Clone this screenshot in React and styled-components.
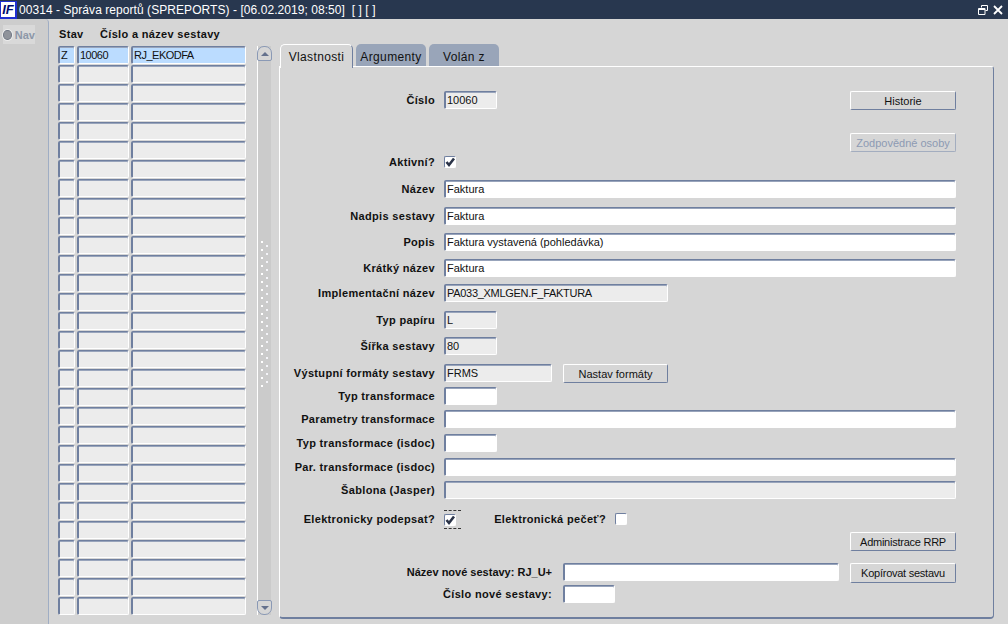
import React from "react"
import styled, { createGlobalStyle, css } from "styled-components"

const GlobalStyle = createGlobalStyle`
  html, body {
    margin: 0;
    padding: 0;
    background: #d6d6d6;
  }
  * {
    box-sizing: border-box;
  }
`

const Page = styled.div`
  width: 1008px;
  height: 624px;
  overflow: hidden;
  display: flex;
  flex-direction: column;
  background: #d6d6d6;
  color: #111;
  font-family: "Liberation Sans", Arial, sans-serif;
  font-size: 11px;
`

const TitleBar = styled.div`
  height: 19px;
  flex: none;
  display: flex;
  align-items: center;
  background: #28374f;
  color: #fff;
  font-size: 12px;
  padding-right: 5px;
`

const Logo = styled.span`
  width: 17px;
  height: 18px;
  margin-right: 2px;
  background: #fff;
  border: 1px solid #1f2fd0;
  border-width: 1px 2px 2px 1px;
  color: #000a6e;
  font-size: 13px;
  font-weight: bold;
  font-style: italic;
  line-height: 15px;
  text-align: center;
`

const TitleText = styled.span`
  flex: 1;
  white-space: pre;
  letter-spacing: 0.06px;
`

const WindowIcon = styled.svg`
  display: block;
  margin-left: 5px;
`

const Body = styled.div`
  flex: 1;
  display: flex;
  min-height: 0;
`

const NavStrip = styled.div`
  width: 49px;
  flex: none;
  padding: 6px 0 0 3px;
  background: #cdcdcd;
  border-right: 1px solid #9fadc4;
  border-top-right-radius: 4px;
`

const NavItem = styled.div`
  width: 32px;
  height: 19px;
  display: flex;
  align-items: center;
  gap: 3px;
  background: #d9d9d9;
  color: #8d97a8;
  font-weight: bold;
`

const Radio = styled.span`
  width: 10px;
  height: 10px;
  border-radius: 50%;
  background: #8f939b;
  border: 1px solid #6f7683;
  box-shadow: 0 0 0 1px #eee;
`

const ListArea = styled.div`
  width: 188px;
  flex: none;
  margin-left: 9px;
  padding-top: 9px;
`

const ListHeader = styled.div`
  display: flex;
  height: 18px;
  font-weight: bold;
  letter-spacing: 0.03em;
`

const HeaderCell = styled.span`
  width: ${({ $w }) => $w}px;
  padding-left: 1px;
`

const ListRow = styled.div`
  display: flex;
  gap: 2px;
  height: 18px;
  margin-bottom: 1px;
`

const fieldEdges = css`
  border-style: solid;
  border-width: 1px 1px 1px 2px;
  border-color: #6f7f9f #fff #fff #6f7f9f;
  border-radius: 2px;
  box-shadow: inset 0 1px #98a4bb;
`

const Cell = styled.div`
  ${fieldEdges}
  width: ${({ $w }) => $w}px;
  background: ${({ $active }) => ($active ? "#bbdcff" : "#ececec")};
  padding: 1px 0 0 1px;
  line-height: 15px;
  letter-spacing: -0.5px;
  white-space: nowrap;
  overflow: hidden;
`

const ScrollBar = styled.div`
  width: 14px;
  height: 569px;
  flex: none;
  margin: 27px 0 0 11px;
  position: relative;
  display: flex;
  flex-direction: column;
  justify-content: space-between;
  background: #cbcbcb;
  border-left: 1px solid #fff;
`

const ScrollButton = styled.div`
  width: 15px;
  height: 15px;
  margin-left: -1px;
  display: flex;
  align-items: center;
  justify-content: center;
  background: #d6d6d6;
  border: 1px solid #8a99b5;
  border-radius: ${({ $up }) => ($up ? "7px 7px 2px 2px" : "2px 2px 7px 7px")};
  &::after {
    content: "";
    border-left: 4px solid transparent;
    border-right: 4px solid transparent;
    ${({ $up }) =>
      $up
        ? "border-bottom: 4px solid #64718d;"
        : "border-top: 4px solid #64718d;"}
  }
`

const Splitter = styled.svg`
  position: absolute;
  left: 3px;
  top: 195px;
`

const TabArea = styled.div`
  width: 715px;
  flex: none;
  margin-left: 8px;
  padding-top: 25px;
  display: flex;
  flex-direction: column;
`

const TabBar = styled.div`
  height: 22px;
  display: flex;
  gap: 3px;
  padding-left: 1px;
`

const Tab = styled.div`
  width: ${({ $w }) => $w}px;
  height: ${({ $active }) => ($active ? "24px" : "22px")};
  display: flex;
  align-items: center;
  justify-content: center;
  position: relative;
  z-index: ${({ $active }) => ($active ? 1 : 0)};
  padding-top: ${({ $active }) => ($active ? "1px" : "3px")};
  font-size: 12px;
  letter-spacing: 0.03em;
  border-radius: 5px 5px 0 0;
  background: ${({ $active }) => ($active ? "#d6d6d6" : "#99a5b9")};
  ${({ $active }) =>
    $active &&
    css`
      border-top: 1px solid #fff;
      border-left: 1px solid #fff;
      border-right: 1px solid #6f7f9f;
    `}
`

const Panel = styled.div`
  height: 553px;
  border: 1px solid #fff;
  border-right: 1px solid #6f7f9f;
  border-bottom: 2px solid #6f7f9f;
  border-radius: 0 3px 4px 4px;
  padding: 24px 0 0;
`

const Row = styled.div`
  display: flex;
  align-items: flex-start;
  height: ${({ $h }) => $h || 18}px;
  margin-top: ${({ $mt }) => $mt || 0}px;
`

const Label = styled.span`
  width: ${({ $w }) => $w || 155}px;
  flex: none;
  margin-right: ${({ $mr }) => ($mr === undefined ? 9 : $mr)}px;
  text-align: right;
  font-weight: bold;
  letter-spacing: ${({ $tight }) => ($tight ? "0" : "0.03em")};
  line-height: 18px;
  white-space: nowrap;
`

const Field = styled.div`
  ${fieldEdges}
  width: ${({ $w }) => $w}px;
  height: 18px;
  flex: none;
  background: ${({ $readOnly }) => ($readOnly ? "#ececec" : "#fff")};
  padding: 1px 0 0 1px;
  line-height: 15px;
  letter-spacing: ${({ $caps }) => ($caps ? "-0.3px" : "0")};
  white-space: nowrap;
  overflow: hidden;
`

const Button = styled.div`
  width: ${({ $w }) => $w || 106}px;
  height: ${({ $h }) => $h || 19}px;
  flex: none;
  margin-left: ${({ $ml }) => $ml || 0}px;
  display: flex;
  align-items: center;
  justify-content: center;
  border: 1px solid;
  border-color: #fff #6f7f9f #6f7f9f #fff;
  border-radius: 2px;
  letter-spacing: ${({ $tight }) => ($tight ? "-0.25px" : "0")};
  color: ${({ $disabled }) => ($disabled ? "#8d9ab3" : "#111")};
  ${({ $disabled }) => $disabled && "border-color: #fff #a3adbf #a3adbf #fff;"}
`

const FocusBox = styled.div`
  width: 17px;
  height: 19px;
  flex: none;
  display: flex;
  align-items: center;
  border-top: 1px dashed #333;
  border-bottom: 1px dashed #333;
`

const CheckBox = styled.span`
  ${fieldEdges}
  width: 12px;
  height: 12px;
  flex: none;
  margin-top: ${({ $mt }) => $mt || 0}px;
  display: block;
  background: #fff;
  border-width: 1px;
  box-shadow: none;
`

const CheckMark = styled.svg`
  display: block;
  margin: -1px;
`

const Check = ({ checked, mt }) => (
  <CheckBox $mt={mt}>
    {checked && (
      <CheckMark width="12" height="12" viewBox="0 0 12 12">
        <path d="M2.5 6 L5 9 L10 2.5" fill="none" stroke="#2b3448" strokeWidth="2.6" />
      </CheckMark>
    )}
  </CheckBox>
)

const listRows = Array.from({ length: 30 }, (_, i) => i)

const App = () => {
  return (
    <Page>
      <GlobalStyle />
      <TitleBar>
        <Logo>IF</Logo>
        <TitleText>00314 - Správa reportů (SPREPORTS) - [06.02.2019; 08:50]  [ ] [ ]</TitleText>
        <WindowIcon width="10" height="10" viewBox="0 0 10 10">
          <path d="M3.5 2.5V.5h6v5h-2M.5 3.5h6.5v6H.5z M.5 4.5h6.5" fill="none" stroke="#fff" />
        </WindowIcon>
        <WindowIcon width="10" height="10" viewBox="0 0 10 10">
          <path d="M1 1 L9 9 M9 1 L1 9" fill="none" stroke="#fff" strokeWidth="1.8" />
        </WindowIcon>
      </TitleBar>
      <Body>
        <NavStrip>
          <NavItem>
            <Radio />
            Nav
          </NavItem>
        </NavStrip>
        <ListArea>
          <ListHeader>
            <HeaderCell $w={41}>Stav</HeaderCell>
            <HeaderCell $w={147}>Číslo a název sestavy</HeaderCell>
          </ListHeader>
          {listRows.map((i) => (
            <ListRow key={i}>
              <Cell $w={17} $active={i === 0}>{i === 0 ? "Z" : ""}</Cell>
              <Cell $w={52} $active={i === 0}>{i === 0 ? "10060" : ""}</Cell>
              <Cell $w={115} $active={i === 0}>{i === 0 ? "RJ_EKODFA" : ""}</Cell>
            </ListRow>
          ))}
        </ListArea>
        <ScrollBar>
          <ScrollButton $up />
          <Splitter width="8" height="146" viewBox="0 0 8 146">
            {Array.from({ length: 37 }, (_, i) => (
              <rect key={i} x={i % 2 ? 5 : 0} y={i * 4} width="2" height="2" fill={i % 2 ? "#f4f4f8" : "#fff"} />
            ))}
          </Splitter>
          <ScrollButton />
        </ScrollBar>
        <TabArea>
          <TabBar>
            <Tab $w={73} $active>Vlastnosti</Tab>
            <Tab $w={70}>Argumenty</Tab>
            <Tab $w={70}>Volán z</Tab>
          </TabBar>
          <Panel>
            <Row $h={19}>
              <Label>Číslo</Label>
              <Field $w={53} $readOnly>10060</Field>
              <Button $ml={353}>Historie</Button>
            </Row>
            <Row $h={19} $mt={23}>
              <Button $ml={570} $disabled>Zodpovědné osoby</Button>
            </Row>
            <Row $mt={1}>
              <Label>Aktivní?</Label>
              <Check checked mt={3} />
            </Row>
            <Row $mt={9}>
              <Label>Název</Label>
              <Field $w={512}>Faktura</Field>
            </Row>
            <Row $mt={9}>
              <Label>Nadpis sestavy</Label>
              <Field $w={512}>Faktura</Field>
            </Row>
            <Row $mt={8}>
              <Label>Popis</Label>
              <Field $w={512}>Faktura vystavená (pohledávka)</Field>
            </Row>
            <Row $mt={8}>
              <Label>Krátký název</Label>
              <Field $w={512}>Faktura</Field>
            </Row>
            <Row $mt={7}>
              <Label>Implementační název</Label>
              <Field $w={224} $readOnly $caps>PA033_XMLGEN.F_FAKTURA</Field>
            </Row>
            <Row $mt={9}>
              <Label>Typ papíru</Label>
              <Field $w={53} $readOnly>L</Field>
            </Row>
            <Row $mt={8}>
              <Label>Šířka sestavy</Label>
              <Field $w={53} $readOnly>80</Field>
            </Row>
            <Row $mt={9}>
              <Label>Výstupní formáty sestavy</Label>
              <Field $w={108} $readOnly>FRMS</Field>
              <Button $w={105} $ml={11}>Nastav formáty</Button>
            </Row>
            <Row $mt={5}>
              <Label>Typ transformace</Label>
              <Field $w={53} />
            </Row>
            <Row $mt={5}>
              <Label>Parametry transformace</Label>
              <Field $w={512} />
            </Row>
            <Row $mt={6}>
              <Label>Typ transformace (isdoc)</Label>
              <Field $w={53} />
            </Row>
            <Row $mt={6}>
              <Label>Par. transformace (isdoc)</Label>
              <Field $w={512} />
            </Row>
            <Row $mt={5}>
              <Label>Šablona (Jasper)</Label>
              <Field $w={512} $readOnly />
            </Row>
            <Row $mt={11}>
              <Label>Elektronicky podepsat?</Label>
              <FocusBox>
                <Check checked />
              </FocusBox>
              <Label $w={145} $mr={9}>Elektronická pečeť?</Label>
              <Check mt={3} />
            </Row>
            <Row $h={19} $mt={4}>
              <Button $ml={570} $tight>Administrace RRP</Button>
            </Row>
            <Row $h={20} $mt={12}>
              <Label $w={272} $mr={11} $tight>Název nové sestavy: RJ_U+</Label>
              <Field $w={276} />
              <Button $h={20} $ml={11} $tight>Kopírovat sestavu</Button>
            </Row>
            <Row $mt={2}>
              <Label $w={272} $mr={11}>Číslo nové sestavy:</Label>
              <Field $w={52} />
            </Row>
          </Panel>
        </TabArea>
      </Body>
    </Page>
  )
}

export default App
